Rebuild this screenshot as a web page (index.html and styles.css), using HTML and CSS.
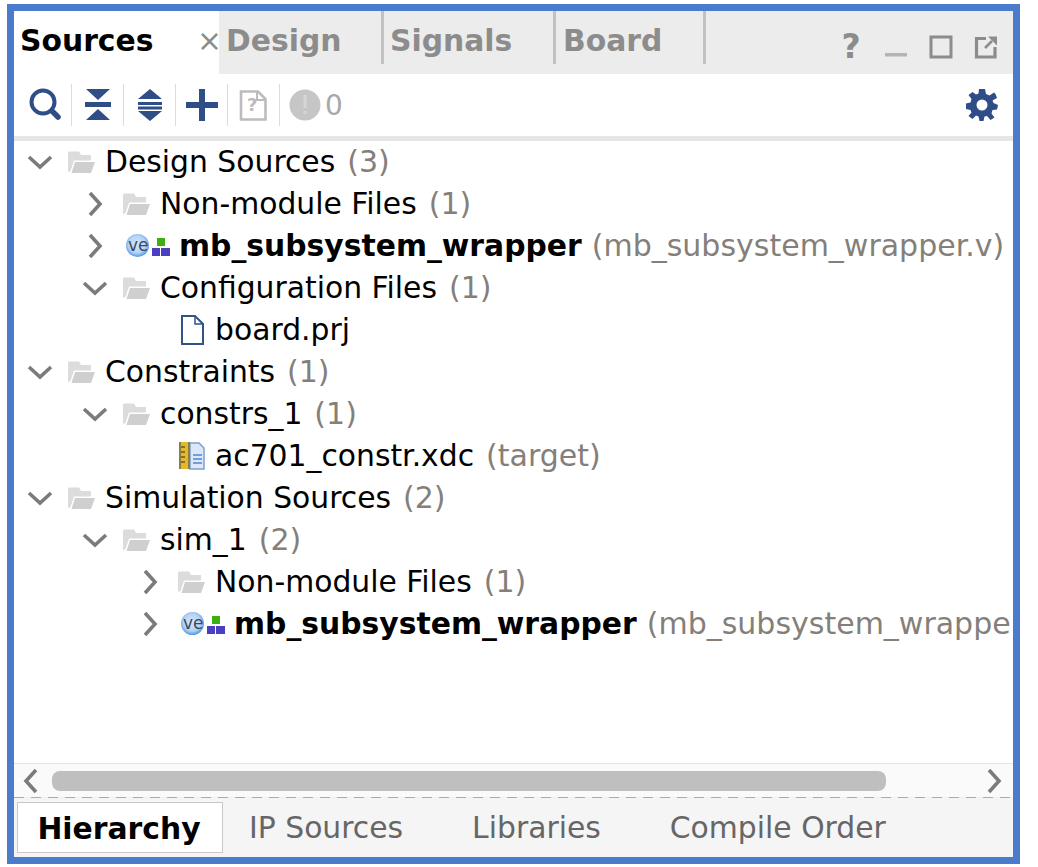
FILE: index.html
```html
<!DOCTYPE html>
<html lang="en">
<head>
    <meta charset="UTF-8">
    <title>Sources</title>
    <link rel="stylesheet" href="styles.css">
</head>
<body>
    <svg class="defs" width="0" height="0">
        <symbol id="folder" viewBox="0 0 27 22">
            <path d="M0 1.500 1 .5H11L13 4H23V9.500H6L2.500 20 0 21Z" fill="#dcdcdc"/>
            <path d="M7 11H27L23 22H3.500Z" fill="#cfcfcf"/>
        </symbol>
        <symbol id="ve" viewBox="0 0 55 26">
            <defs>
                <radialGradient id="ball" cx="48%" cy="45%" r="58%">
                    <stop offset="0" stop-color="#d9e9fa"/>
                    <stop offset="0.65" stop-color="#b4d2f4"/>
                    <stop offset="1" stop-color="#3f8ae6"/>
                </radialGradient>
            </defs>
            <circle cx="14.500" cy="12.500" r="11.500" fill="url(#ball)"/>
            <rect x="34" y="5" width="8" height="8" fill="#3faf10"/>
            <rect x="29" y="15" width="8" height="8" fill="#4a3fc0"/>
            <rect x="38" y="15" width="9" height="8" fill="#4a3fc0"/>
        </symbol>
        <symbol id="chev-down" viewBox="0 0 28 18">
            <path d="M3 4 14 14 25 4" fill="none" stroke="#7b7b7b" stroke-width="3.600"/>
        </symbol>
        <symbol id="chev-right" viewBox="0 0 18 28">
            <path d="M4 3 14 14 4 25" fill="none" stroke="#7b7b7b" stroke-width="3.600"/>
        </symbol>
        <symbol id="chev-left" viewBox="0 0 18 28">
            <path d="M15 3 5 14 15 25" fill="none" stroke="#7b7b7b" stroke-width="3.600"/>
        </symbol>
    </svg>

    <div class="panel">
        <div class="tabbar">
            <div class="tab tab-active">
                <span>Sources</span>
                <span class="tab-close">×</span>
            </div>
            <div class="tab tab-design">Design</div>
            <div class="tab tab-signals">Signals</div>
            <div class="tab tab-board">Board</div>
            <div class="win-icons">
                <span class="win-help">?</span>
                <svg width="24" height="24" viewBox="0 0 24 24"><rect x="1" y="18" width="22" height="3.500" fill="#b4b4b4"/></svg>
                <svg width="24" height="24" viewBox="0 0 24 24"><rect x="2" y="2" width="20" height="20" fill="none" stroke="#8c8c8c" stroke-width="3"/></svg>
                <svg width="24" height="24" viewBox="0 0 24 24">
                    <path d="M12 3.500H2.500V22H21V12" fill="none" stroke="#8c8c8c" stroke-width="3.200"/>
                    <path d="M11 13 18 6" stroke="#8c8c8c" stroke-width="2.500"/>
                    <path d="M14 1.500H23V10.500Z" fill="#8c8c8c"/>
                </svg>
            </div>
        </div>

        <div class="toolbar">
            <div class="tool">
                <svg width="34" height="34" viewBox="0 0 34 34">
                    <circle cx="14" cy="14" r="11.500" fill="none" stroke="#2f4d87" stroke-width="4"/>
                    <path d="M23.500 23.500 29 29" stroke="#2f4d87" stroke-width="5.500" stroke-linecap="round"/>
                </svg>
            </div>
            <div class="tool">
                <svg width="26" height="32" viewBox="0 0 26 32">
                    <path d="M1 0H25L13 11Z M0 13H26V18H0Z M1 31H25L13 20Z" fill="#2f4d87"/>
                </svg>
            </div>
            <div class="tool">
                <svg width="26" height="32" viewBox="0 0 26 32">
                    <path d="M1 10H25L13 0Z M1 13H25V16H1Z M1 17.500H25V20.500H1Z M1 22H25L13 32Z" fill="#2f4d87"/>
                </svg>
            </div>
            <div class="tool">
                <svg width="32" height="32" viewBox="0 0 32 32">
                    <path d="M13 0H19V13H32V19H19V32H13V19H0V13H13Z" fill="#2f4d87"/>
                </svg>
            </div>
            <div class="tool">
                <svg class="doc" width="28" height="31" viewBox="0 0 28 31">
                    <path d="M2 1.500H19L26.500 9V29.500H2Z" fill="none" stroke="#bcbcbc" stroke-width="2.600"/>
                    <path d="M18 2V10H26" fill="none" stroke="#bcbcbc" stroke-width="2"/>
                </svg>
                <span class="doc-mark">?</span>
            </div>
            <div class="tool tool-last">
                <svg width="32" height="32" viewBox="0 0 32 32">
                    <circle cx="16" cy="16" r="15.500" fill="#c6c6c6"/>
                    <rect x="14.500" y="6" width="3" height="13" fill="#d6d6d6"/>
                    <rect x="14.500" y="22" width="3" height="3" fill="#d6d6d6"/>
                </svg>
                <span class="count">0</span>
            </div>
            <svg class="gear" width="32" height="32" viewBox="0 0 32 32">
                <path fill="#2f4d87" fill-rule="evenodd" d="M13 0H19L20 5 23.500 6.500 28 3.500 29.500 5 31 9 26.500 11.500 27.500 14 32 16 31 20.500 26.500 21 25.500 24.500 28.500 28.500 24.500 31 21 27 18.500 27.500 17.500 32H13.500L12.500 27.500 10 26.500 6.500 30 2.500 27 5.500 23.500 4.500 21 0 20V14.500L4.500 13.500 5.500 10 2.500 6 6.500 3 10 5.500 12.500 4.500ZM16 10.500A5.500 5.500 0 1 0 16 21.500 5.500 5.500 0 1 0 16 10.500Z"/>
            </svg>
        </div>

        <div class="tree">
            <div class="row">
                <svg class="twisty" width="28" height="18"><use href="#chev-down"/></svg>
                <svg class="ico" width="27" height="22"><use href="#folder"/></svg>
                <span class="name">Design Sources</span><span class="note">(3)</span>
            </div>
            <div class="row lvl1">
                <svg class="twisty twisty-closed" width="18" height="28"><use href="#chev-right"/></svg>
                <svg class="ico" width="27" height="22"><use href="#folder"/></svg>
                <span class="name">Non-module Files</span><span class="note">(1)</span>
            </div>
            <div class="row lvl1">
                <svg class="twisty twisty-closed" width="18" height="28"><use href="#chev-right"/></svg>
                <span class="ico-ve"><svg width="55" height="26"><use href="#ve"/></svg><span class="ve-text">ve</span></span>
                <span class="name bold">mb_subsystem_wrapper</span><span class="note">(mb_subsystem_wrapper.v)</span>
            </div>
            <div class="row lvl1">
                <svg class="twisty" width="28" height="18"><use href="#chev-down"/></svg>
                <svg class="ico" width="27" height="22"><use href="#folder"/></svg>
                <span class="name">Configuration Files</span><span class="note">(1)</span>
            </div>
            <div class="row leaf">
                <svg class="ico" width="27" height="30" viewBox="0 0 27 30">
                    <path d="M4 1H17L25 9V29H4Z" fill="#fff" stroke="#34528a" stroke-width="2"/>
                    <path d="M17 1V9H25" fill="none" stroke="#34528a" stroke-width="1.500"/>
                </svg>
                <span class="name">board.prj</span>
            </div>
            <div class="row">
                <svg class="twisty" width="28" height="18"><use href="#chev-down"/></svg>
                <svg class="ico" width="27" height="22"><use href="#folder"/></svg>
                <span class="name">Constraints</span><span class="note">(1)</span>
            </div>
            <div class="row lvl1">
                <svg class="twisty" width="28" height="18"><use href="#chev-down"/></svg>
                <svg class="ico" width="27" height="22"><use href="#folder"/></svg>
                <span class="name">constrs_1</span><span class="note">(1)</span>
            </div>
            <div class="row leaf">
                <svg class="ico" width="27" height="28" viewBox="0 0 27 28">
                    <path d="M12 1H21L26 6V27H12Z" fill="#dce8f8" stroke="#7f9fd0" stroke-width="1.500"/>
                    <path d="M15 13H24M15 17H24M15 21H24" stroke="#6f9fe0" stroke-width="1.800"/>
                    <rect x="1" y="0" width="11" height="27" fill="#e2b82e"/>
                    <path d="M1 0H3V27H1ZM10 0H12V27H10Z" fill="#8f7d3c"/>
                    <path d="M3 5H7M3 10H7M3 15H7M3 20H7" stroke="#6a5a20" stroke-width="1.500"/>
                </svg>
                <span class="name">ac701_constr.xdc</span><span class="note">(target)</span>
            </div>
            <div class="row">
                <svg class="twisty" width="28" height="18"><use href="#chev-down"/></svg>
                <svg class="ico" width="27" height="22"><use href="#folder"/></svg>
                <span class="name">Simulation Sources</span><span class="note">(2)</span>
            </div>
            <div class="row lvl1">
                <svg class="twisty" width="28" height="18"><use href="#chev-down"/></svg>
                <svg class="ico" width="27" height="22"><use href="#folder"/></svg>
                <span class="name">sim_1</span><span class="note">(2)</span>
            </div>
            <div class="row lvl2">
                <svg class="twisty twisty-closed" width="18" height="28"><use href="#chev-right"/></svg>
                <svg class="ico" width="27" height="22"><use href="#folder"/></svg>
                <span class="name">Non-module Files</span><span class="note">(1)</span>
            </div>
            <div class="row lvl2">
                <svg class="twisty twisty-closed" width="18" height="28"><use href="#chev-right"/></svg>
                <span class="ico-ve"><svg width="55" height="26"><use href="#ve"/></svg><span class="ve-text">ve</span></span>
                <span class="name bold">mb_subsystem_wrapper</span><span class="note">(mb_subsystem_wrapper.v)</span>
            </div>
        </div>

        <div class="hscroll">
            <svg width="18" height="28"><use href="#chev-left"/></svg>
            <div class="hscroll-track"><div class="hscroll-thumb"></div></div>
            <svg width="18" height="28"><use href="#chev-right"/></svg>
        </div>
        <div class="dash"></div>

        <div class="bottom-tabs">
            <div class="btab btab-active">Hierarchy</div>
            <div class="btab">IP Sources</div>
            <div class="btab">Libraries</div>
            <div class="btab">Compile Order</div>
        </div>
    </div>
</body>
</html>
```

FILE: styles.css
```css
html, body {
    margin: 0;
    padding: 0;
    background: #fff;
}
.defs {
    position: absolute;
}
.panel {
    box-sizing: border-box;
    width: 1013px;
    height: 860px;
    margin: 4px 0 0 7px;
    border: 7px solid #4a7bcd;
    display: flex;
    flex-direction: column;
    font-family: "DejaVu Sans", sans-serif;
    font-size: 29.8px;
    overflow: hidden;
}

.tabbar {
    display: flex;
    height: 63px;
    flex: none;
    background: #ececec;
    font-weight: bold;
    color: #8c8c8c;
}
.tab {
    box-sizing: border-box;
    height: 53px;
    padding-top: 12px;
    line-height: 35px;
    border-right: 3px solid #c2c2c2;
}
.tab-active {
    width: 205px;
    height: 63px;
    padding-left: 6px;
    border-right: 0;
    background: #fff;
    color: #000;
    display: flex;
    justify-content: space-between;
}
.tab-close {
    margin-right: -3px;
    font-weight: normal;
    color: #8c8c8c;
}
.tab-design {
    width: 165px;
    padding-left: 7px;
}
.tab-signals {
    width: 172px;
    padding-left: 6px;
}
.tab-board {
    width: 150px;
    padding-left: 7px;
}
.win-icons {
    margin-left: auto;
    display: flex;
    align-items: center;
    gap: 21px;
    padding: 12px 15px 0 0;
    height: 47px;
}
.win-help {
    width: 24px;
    text-align: center;
    line-height: 1;
    font-size: 33px;
}

.toolbar {
    display: flex;
    align-items: center;
    height: 62px;
    flex: none;
    padding: 0 15px 0 6px;
    border-bottom: 5px solid #e6e6e6;
}
.tool {
    box-sizing: border-box;
    width: 52px;
    height: 42px;
    border-right: 1px solid #dcdcdc;
    display: flex;
    align-items: center;
    justify-content: center;
    position: relative;
}
.tool-last {
    border-right: 0;
    width: auto;
    justify-content: flex-start;
    padding-left: 9px;
    gap: 4px;
}
.doc {
    margin-left: -2px;
}
.doc-mark {
    position: absolute;
    left: 19px;
    top: 9px;
    font-size: 18px;
    line-height: 24px;
    font-weight: bold;
    color: #bcbcbc;
}
.count {
    color: #a8a8a8;
    font-size: 28px;
}
.gear {
    margin-left: auto;
}

.tree {
    flex: 1;
    min-height: 0;
    overflow: hidden;
    padding-left: 12px;
    margin-right: 3px;
}
.row {
    display: flex;
    align-items: center;
    height: 42px;
    line-height: 40px;
    white-space: nowrap;
    color: #000;
}
.lvl1 {
    padding-left: 55px;
}
.lvl2 {
    padding-left: 110px;
}
.leaf {
    padding-left: 152px;
}
.twisty {
    flex: none;
    margin-right: 14px;
}
.twisty-closed {
    margin-left: 5px;
    margin-right: 19px;
}
.ico {
    flex: none;
    margin-right: 10px;
}
.ico-ve {
    flex: none;
    position: relative;
    width: 56px;
    height: 26px;
}
.ico-ve svg {
    display: block;
}
.ve-text {
    position: absolute;
    left: 5px;
    top: 3px;
    font-size: 17px;
    line-height: 18px;
    color: #3a4a60;
}
.name,
.note {
    margin-bottom: 1px;
}
.bold {
    font-weight: bold;
}
.note {
    margin-left: 12px;
    color: #857f7a;
    font-size: 30px;
}
.bold + .note {
    margin-left: 10px;
}

.hscroll {
    display: flex;
    align-items: center;
    flex: none;
    box-sizing: border-box;
    height: 34px;
    padding: 0 10px 0 7px;
    background: #fafafa;
    border-top: 1px solid #e4e4e4;
}
.hscroll-track {
    flex: 1;
    padding: 0 99px 0 13px;
}
.hscroll-thumb {
    height: 20px;
    border-radius: 8px;
    background: #bfbfbf;
}
.dash {
    flex: none;
    height: 1px;
    background: repeating-linear-gradient(90deg, #aaa 0 10px, #f0f0f0 10px 17px);
}

.bottom-tabs {
    display: flex;
    flex: none;
    box-sizing: border-box;
    height: 59px;
    align-items: stretch;
    padding: 4px 0 4px 3px;
    background: #f5f5f5;
    gap: 69px;
    color: #666;
}
.btab {
    line-height: 52px;
}
.btab-active {
    box-sizing: border-box;
    width: 206px;
    margin-right: -43px;
    padding-right: 2px;
    text-align: center;
    background: #fff;
    border: 1px solid #c8c8c8;
    color: #000;
    font-weight: bold;
}
```
